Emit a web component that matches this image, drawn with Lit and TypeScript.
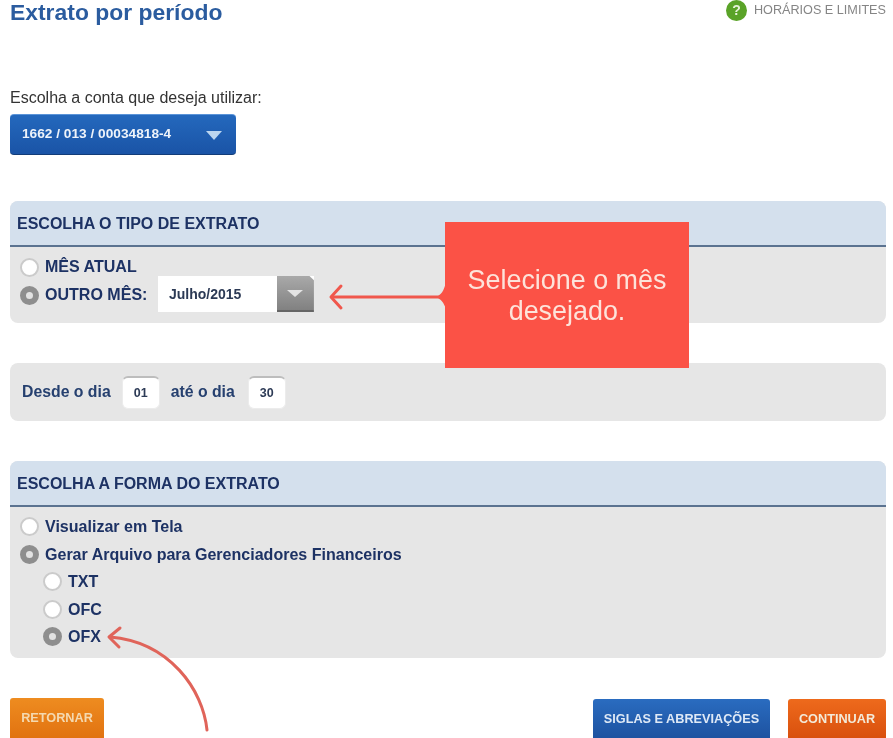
import { LitElement, html, css } from "lit";
import { customElement } from "lit/decorators.js";

@customElement("app-root")
export class AppRoot extends LitElement {
  static styles = css`
    :host {
      display: block;
      position: relative;
      width: 893px;
      height: 738px;
      overflow: hidden;
      background: #fff;
      font-family: "Liberation Sans", Arial, sans-serif;
      color: #1d3264;
    }
    .page {
      display: flex;
      flex-direction: column;
      padding: 0 7px 0 10px;
      filter: blur(0.6px);
    }
    .top {
      display: flex;
      justify-content: space-between;
      align-items: flex-start;
      height: 87px;
    }
    h1 {
      margin: 0;
      font-size: 22.9px;
      line-height: 24px;
      font-weight: 700;
      color: #2b5c9f;
    }
    .help {
      display: flex;
      align-items: center;
      gap: 7px;
      height: 20px;
      font-size: 12.65px;
      color: #858585;
    }
    .q {
      width: 21px;
      height: 21px;
      border-radius: 50%;
      background: #5aa328;
      color: #e6f2d8;
      font-weight: 700;
      font-size: 14px;
      display: flex;
      align-items: center;
      justify-content: center;
    }
    .lbl {
      font-size: 16px;
      line-height: 22px;
      color: #333;
      height: 27px;
    }
    .acct {
      width: 226px;
      height: 41px;
      box-sizing: border-box;
      border-radius: 4px;
      background: linear-gradient(#2468bd, #1a54a6);
      border-top: 1px solid #5b94d8;
      border-bottom: 1px solid #123c78;
      display: flex;
      align-items: center;
      justify-content: space-between;
      padding: 0 14px 3px 12px;
      color: #eef3fa;
      font-size: 13.7px;
      font-weight: 700;
      margin-bottom: 46px;
    }
    .acct i {
      width: 0;
      height: 0;
      border-left: 8px solid transparent;
      border-right: 8px solid transparent;
      border-top: 9px solid #bcd6f0;
      margin-top: 5px;
    }
    .panel {
      background: #e6e6e6;
      border-radius: 8px;
      overflow: hidden;
    }
    .head {
      height: 46px;
      box-sizing: border-box;
      background: #d4e0ed;
      display: flex;
      align-items: center;
      padding: 2px 7px 0;
      font-size: 16px;
      font-weight: 700;
      color: #1d3264;
      border-bottom: 2px solid #5b7390;
    }
    .tipo {
      height: 122px;
      margin-bottom: 40px;
    }
    .body {
      display: flex;
      flex-direction: column;
      padding: 5px 10px 0;
      font-weight: 700;
      font-size: 16.05px;
      color: #1d3264;
    }
    .forma .body {
      padding-top: 6px;
    }
    .row {
      display: flex;
      align-items: center;
      gap: 6px;
      height: 27.5px;
    }
    .tipo .row {
      height: 28px;
    }
    .tipo .radio {
      margin-top: 3px;
    }
    .sub {
      padding-left: 23px;
    }
    .radio {
      width: 15px;
      height: 15px;
      box-sizing: content-box;
      border: 2px solid #cbcbcb;
      border-radius: 50%;
      background: #fff;
      flex: none;
    }
    .radio.on {
      background: #e2e2e2;
      border: 6px solid #8e8e8e;
      width: 7px;
      height: 7px;
    }
    .select {
      display: flex;
      width: 156px;
      height: 36px;
      margin-left: 4.5px;
      background: #fff;
      align-items: center;
      justify-content: space-between;
      font-size: 14px;
      color: #2c3a55;
      padding-left: 11px;
      box-sizing: border-box;
    }
    .drop {
      width: 37px;
      height: 36px;
      background: linear-gradient(#a9a9a9, #818181);
      border-bottom: 2px solid #666;
      box-sizing: border-box;
      display: flex;
      align-items: center;
      justify-content: center;
      clip-path: polygon(0 0, 88% 0, 100% 12%, 100% 100%, 0 100%);
    }
    .drop i {
      width: 0;
      height: 0;
      border-left: 8px solid transparent;
      border-right: 8px solid transparent;
      border-top: 7px solid #e4e4e4;
    }
    .dias {
      height: 58px;
      margin-bottom: 40px;
      display: flex;
      align-items: center;
      padding: 0 12px;
      font-size: 15.8px;
      font-weight: 700;
      color: #26406f;
    }
    .box {
      width: 38px;
      height: 33px;
      margin: 0 11px;
      box-sizing: border-box;
      border-radius: 6px;
      background: #fff;
      border: 1px solid #ececec;
      border-top: 2px solid #bdbdbd;
      display: flex;
      align-items: center;
      justify-content: center;
      font-size: 12.5px;
      color: #2c3a55;
    }
    .box + .box {
      margin-left: 13px;
    }
    .forma {
      height: 197px;
      margin-bottom: 40px;
    }
    .foot {
      display: flex;
      gap: 18px;
    }
    .btn {
      height: 44px;
      box-sizing: border-box;
      border-radius: 3px;
      display: flex;
      align-items: center;
      justify-content: center;
      padding-bottom: 5px;
      color: #f3ead9;
      font-size: 12.7px;
      font-weight: 700;
    }
    .retornar {
      width: 94px;
      margin-right: auto;
      background: linear-gradient(#ee8c20, #e0700f);
      color: #f4d9b0;
    }
    .siglas {
      width: 177px;
      margin-top: 1px;
      background: linear-gradient(#2a6cc0, #1c4f9c);
      color: #dfe9f6;
    }
    .continuar {
      width: 98px;
      background: linear-gradient(#ee6a1c, #d64d0c);
      margin-top: 1px;
    }
    .callout {
      position: absolute;
      left: 445px;
      top: 222px;
      width: 244px;
      height: 146px;
      box-sizing: border-box;
      background: #fb5246;
      color: #fde3da;
      font-size: 26.9px;
      line-height: 31.5px;
      text-align: center;
      padding-top: 42.5px;
      filter: blur(0.5px);
    }
    .ink {
      position: absolute;
      left: 0;
      top: 0;
      pointer-events: none;
      filter: blur(0.4px);
    }
  `;

  render() {
    return html`
      <div class="page">
        <div class="top">
          <h1>Extrato por período</h1>
          <div class="help"><span class="q">?</span><span>HORÁRIOS E LIMITES</span></div>
        </div>
        <div class="lbl">Escolha a conta que deseja utilizar:</div>
        <div class="acct"><span>1662 / 013 / 00034818-4</span><i></i></div>

        <section class="panel tipo">
          <div class="head">ESCOLHA O TIPO DE EXTRATO</div>
          <div class="body">
            <div class="row"><span class="radio"></span>MÊS ATUAL</div>
            <div class="row">
              <span class="radio on"></span>OUTRO MÊS:
              <div class="select"><span>Julho/2015</span><span class="drop"><i></i></span></div>
            </div>
          </div>
        </section>

        <section class="panel dias">
          Desde o dia <span class="box">01</span> até o dia <span class="box">30</span>
        </section>

        <section class="panel forma">
          <div class="head">ESCOLHA A FORMA DO EXTRATO</div>
          <div class="body">
            <div class="row"><span class="radio"></span>Visualizar em Tela</div>
            <div class="row"><span class="radio on"></span>Gerar Arquivo para Gerenciadores Financeiros</div>
            <div class="row sub"><span class="radio"></span>TXT</div>
            <div class="row sub"><span class="radio"></span>OFC</div>
            <div class="row sub"><span class="radio on"></span>OFX</div>
          </div>
        </section>

        <div class="foot">
          <div class="btn retornar">RETORNAR</div>
          <div class="btn siglas">SIGLAS E ABREVIAÇÕES</div>
          <div class="btn continuar">CONTINUAR</div>
        </div>
      </div>

      <div class="callout">Selecione o mês<br />desejado.</div>
      <svg class="ink" width="893" height="738" viewBox="0 0 893 738" fill="none">
        <path d="M446 282 C444 291 441 295 436 297 C441 299 444 303 446 309 Z" fill="#fb5246" />
        <path d="M331 297 H440" stroke="#f0574c" stroke-width="3" />
        <path d="M341 286 L331 297 L341 308" stroke="#f0574c" stroke-width="3" stroke-linecap="round" stroke-linejoin="round" />
        <path d="M207 730 C203 690 170 642 110 637" stroke="#e0645a" stroke-width="3" stroke-linecap="round" />
        <path d="M120 628 L109 637 L119 647" stroke="#e0645a" stroke-width="3" stroke-linecap="round" stroke-linejoin="round" />
      </svg>
    `;
  }
}
